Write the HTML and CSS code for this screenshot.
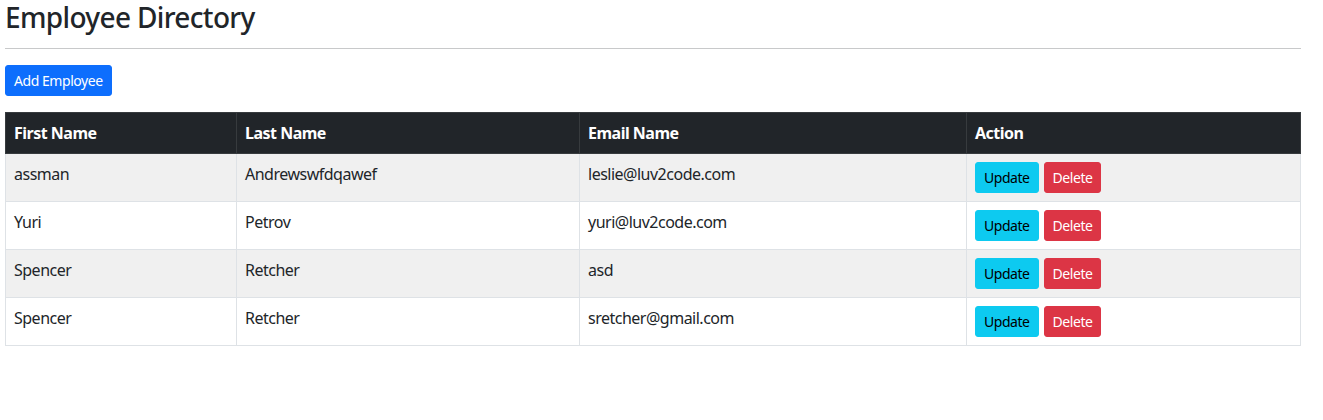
FILE: index.html
```html
<!DOCTYPE html>
<html lang="en">
<head>
<meta charset="utf-8">
<title>Employee Directory</title>
<link rel="stylesheet" href="styles.css">
</head>
<body>
<div class="page">
  <h3 class="title">Employee Directory</h3>
  <hr class="rule">
  <button class="btn btn-primary">Add Employee</button>
  <table class="table">
    <thead>
      <tr>
        <th class="c1">First Name</th>
        <th class="c2">Last Name</th>
        <th class="c3">Email Name</th>
        <th class="c4">Action</th>
      </tr>
    </thead>
    <tbody>
      <tr>
        <td>assman</td><td>Andrewswfdqawef</td><td>leslie@luv2code.com</td>
        <td><div class="actions"><button class="btn btn-info">Update</button><button class="btn btn-danger">Delete</button></div></td>
      </tr>
      <tr>
        <td>Yuri</td><td>Petrov</td><td>yuri@luv2code.com</td>
        <td><div class="actions"><button class="btn btn-info">Update</button><button class="btn btn-danger">Delete</button></div></td>
      </tr>
      <tr>
        <td>Spencer</td><td>Retcher</td><td>asd</td>
        <td><div class="actions"><button class="btn btn-info">Update</button><button class="btn btn-danger">Delete</button></div></td>
      </tr>
      <tr>
        <td>Spencer</td><td>Retcher</td><td>sretcher@gmail.com</td>
        <td><div class="actions"><button class="btn btn-info">Update</button><button class="btn btn-danger">Delete</button></div></td>
      </tr>
    </tbody>
  </table>
</div>
</body>
</html>
```
FILE: styles.css
```css
html, body {
  margin: 0;
  padding: 0;
  background: #fff;
}
body {
  font-family: "Noto Sans", "Open Sans", sans-serif;
  font-size: 16px;
  line-height: 24px;
  color: #212529;
  letter-spacing: -0.5px;
}
.page {
  width: 1296px;
  padding-left: 5px;
}
.title {
  margin: 0;
  font-size: 28px;
  line-height: 34px;
  font-weight: 500;
  letter-spacing: -0.65px;
}
.rule {
  margin: 14px 0 16px;
  border: 0;
  border-top: 1px solid #c8c9ca;
  height: 0;
}
.btn {
  font-family: inherit;
  font-size: 14px;
  line-height: 21px;
  padding: 4px 8px;
  border: 1px solid transparent;
  border-radius: 3px;
  cursor: pointer;
  display: inline-block;
  letter-spacing: -0.45px;
}
.btn-primary {
  background: #0d6efd;
  border-color: #0d6efd;
  color: #fff;
}
.btn-info {
  background: #0dcaf0;
  border-color: #0dcaf0;
  color: #000;
}
.btn-danger {
  background: #dc3545;
  border-color: #dc3545;
  color: #fff;
}
.table {
  margin-top: 16px;
  width: 1296px;
  border-collapse: collapse;
  table-layout: fixed;
}
.table th, .table td {
  border: 1px solid #dee2e6;
  padding: 8px;
  text-align: left;
  vertical-align: top;
}
.table thead th {
  background: #212529;
  color: #fff;
  font-weight: 700;
  border-color: #373b3e;
}
.table tbody tr:nth-child(odd) td {
  background: #f0f0f0;
}
.c1 { width: 214px; }
.c2 { width: 326px; }
.c3 { width: 370px; }
.actions {
  display: flex;
  gap: 5px;
}
```
